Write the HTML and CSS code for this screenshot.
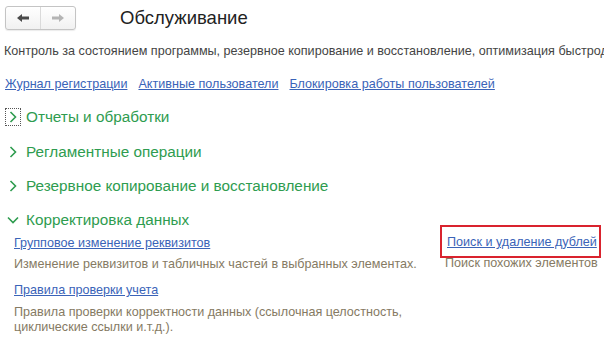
FILE: index.html
```html
<!DOCTYPE html>
<html lang="ru">
<head>
    <meta charset="UTF-8">
    <title>Обслуживание</title>
    <link rel="stylesheet" href="styles.css">
</head>
<body>
    <div class="page">
        <div class="header">
            <div class="nav">
                <span class="nav-btn">
                    <svg width="14" height="10" viewBox="0 0 14 10"><path d="M1 5 L6 1 L6 3.5 L13 3.5 L13 6.5 L6 6.5 L6 9 Z" fill="#4a4a4a"/></svg>
                </span>
                <span class="nav-btn">
                    <svg width="14" height="10" viewBox="0 0 14 10"><path d="M13 5 L8 1 L8 3.5 L1 3.5 L1 6.5 L8 6.5 L8 9 Z" fill="#b4b4b4"/></svg>
                </span>
            </div>
            <div class="title">Обслуживание</div>
        </div>

        <div class="desc">Контроль за состоянием программы, резервное копирование и восстановление, оптимизация быстродействия</div>

        <div class="links">
            <a href="#">Журнал регистрации</a>
            <a href="#">Активные пользователи</a>
            <a href="#">Блокировка работы пользователей</a>
        </div>

        <!-- группы -->
        <div class="group first">
            <span class="chev focus">
                <svg width="8" height="12" viewBox="0 0 8 12"><path d="M1.5 1 L6.5 6 L1.5 11" fill="none" stroke="#2e9c4f" stroke-width="1.6"/></svg>
            </span>
            <span class="group-title">Отчеты и обработки</span>
        </div>
        <div class="group second">
            <span class="chev">
                <svg width="8" height="12" viewBox="0 0 8 12"><path d="M1.5 1 L6.5 6 L1.5 11" fill="none" stroke="#2e9c4f" stroke-width="1.6"/></svg>
            </span>
            <span class="group-title">Регламентные операции</span>
        </div>
        <div class="group">
            <span class="chev">
                <svg width="8" height="12" viewBox="0 0 8 12"><path d="M1.5 1 L6.5 6 L1.5 11" fill="none" stroke="#2e9c4f" stroke-width="1.6"/></svg>
            </span>
            <span class="group-title">Резервное копирование и восстановление</span>
        </div>
        <div class="group">
            <span class="chev">
                <svg width="12" height="8" viewBox="0 0 12 8"><path d="M1 1.5 L6 6.5 L11 1.5" fill="none" stroke="#2e9c4f" stroke-width="1.6"/></svg>
            </span>
            <span class="group-title">Корректировка данных</span>
        </div>

        <div class="items">
            <div class="col-left">
                <a href="#" class="item-link">Групповое изменение реквизитов</a>
                <div class="item-desc">Изменение реквизитов и табличных частей в выбранных элементах.</div>
                <a href="#" class="item-link second">Правила проверки учета</a>
                <div class="item-desc multi">Правила проверки корректности данных (ссылочная целостность,<br>циклические ссылки и.т.д.).</div>
            </div>
            <div class="col-right">
                <div class="marked">
                    <a href="#" class="item-link">Поиск и удаление дублей</a>
                </div>
                <div class="item-desc right">Поиск похожих элементов</div>
            </div>
        </div>
    </div>
</body>
</html>
```

FILE: styles.css
```css
body {
    margin: 0;
    background: #fff;
    font-family: 'Liberation Sans', Arial, sans-serif;
    font-size: 12.6px;
    color: #444;
    overflow: hidden;
    white-space: nowrap;
}

.page {
    padding: 6px 0 0 4px;
}

.header {
    display: flex;
    align-items: center;
    height: 24px;
}

.nav {
    display: flex;
    margin-left: 1px;
    width: 71px;
    height: 24px;
    box-sizing: border-box;
    border: 1px solid #c4c4c4;
    border-radius: 3px;
    background: linear-gradient(#ffffff, #f1f1f1);
    box-shadow: 0 1px 1px rgba(0, 0, 0, 0.08);
}

.nav-btn {
    flex: 1;
    display: flex;
    align-items: center;
    justify-content: center;
}

.nav-btn + .nav-btn {
    border-left: 1px solid #dadada;
}

.title {
    margin-left: 44px;
    font-size: 18.5px;
    color: #222;
    line-height: 24px;
}

.desc {
    margin-top: 13px;
    line-height: 16px;
    color: #444;
    overflow: hidden;
}

.links {
    margin-top: 17px;
    line-height: 16px;
    display: flex;
    gap: 11px;
    padding-left: 1px;
}

a {
    color: #3a63b8;
    text-decoration: underline;
}

.group {
    display: flex;
    align-items: center;
    margin-top: 14px;
    height: 20px;
}

.group.first {
    margin-top: 15px;
}

.group.second {
    margin-top: 15px;
}

.chev {
    width: 16px;
    height: 18px;
    display: flex;
    align-items: center;
    justify-content: center;
    margin-left: 1px;
    box-sizing: border-box;
}

.chev.focus {
    border: 1px dotted #555;
}

.group-title {
    margin-left: 5px;
    font-size: 15.3px;
    color: #2e9c4f;
    line-height: 20px;
}

.items {
    display: flex;
    align-items: flex-start;
}

.col-left {
    width: 436px;
    padding-left: 10px;
    box-sizing: border-box;
    margin-top: 5px;
}

.col-right {
    margin-top: -5px;
}

.item-link {
    display: block;
    line-height: 16px;
}

.item-link.second {
    margin-top: 10px;
}

.item-desc {
    margin-top: 5px;
    line-height: 16px;
    color: #857a63;
}

.item-desc.multi {
    margin-top: 7px;
    line-height: 15px;
}

.marked {
    border: 2px solid #d9232e;
    padding: 7px 2px 6px 5px;
}

.item-desc.right {
    margin-top: -3px;
    margin-left: 5px;
}
```
